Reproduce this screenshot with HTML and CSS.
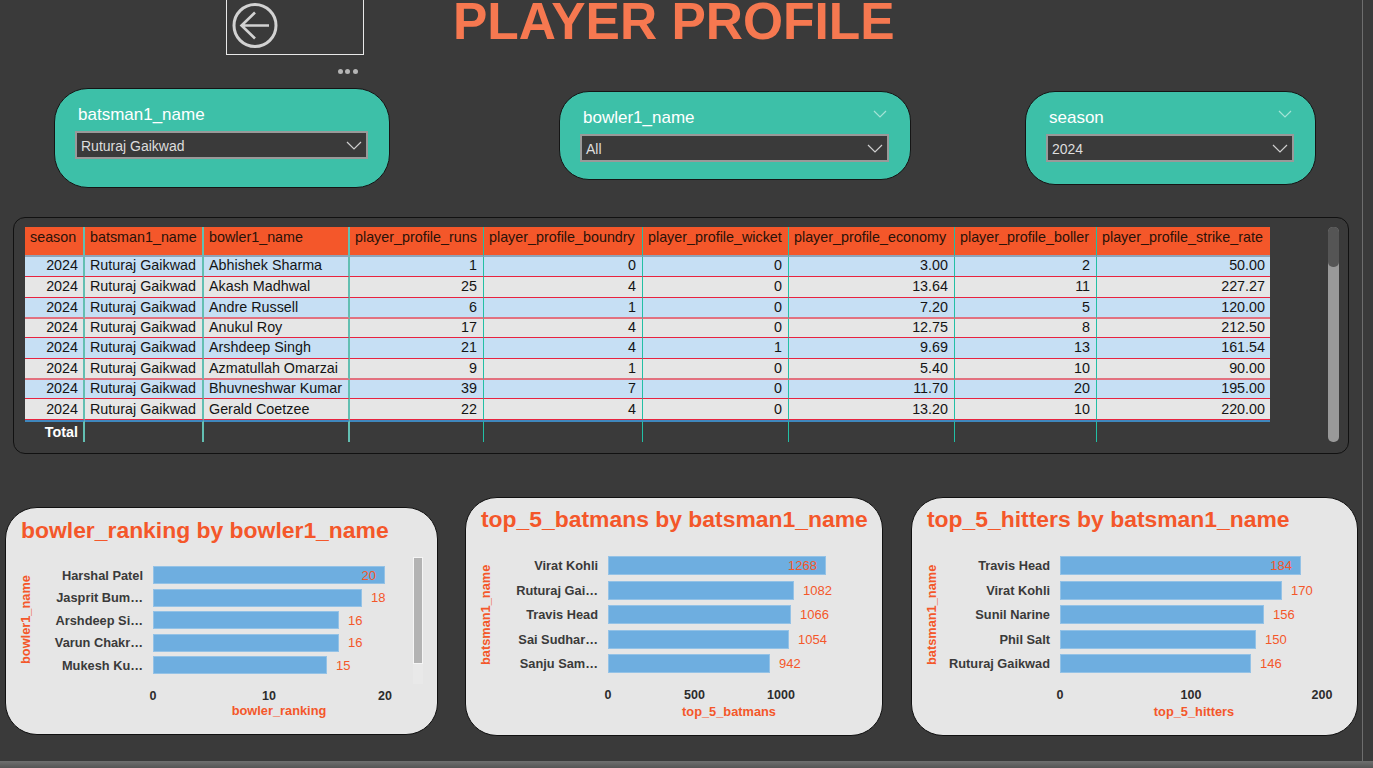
FILE: index.html
```html
<!DOCTYPE html>
<html lang="en">
  <head>
    <meta charset="UTF-8" />
    <meta name="viewport" content="width=device-width, initial-scale=1.0" />

    <title>Player Profile</title>

    <link rel="stylesheet" href="styles.css">
  </head>
  <body>
    <div class="page">
      <header class="top">
        <div class="back-box">
          <svg class="back-icon" width="48" height="48" viewBox="0 0 48 48">
            <circle cx="24" cy="23.500" r="21" fill="none" stroke="#d2d2d2" stroke-width="3" />
            <path d="M38 23.500H11M24 10.500L10.500 23.500L24 36.500" fill="none" stroke="#d2d2d2" stroke-width="2.600" />
          </svg>
        </div>
        <h1 class="title">PLAYER PROFILE</h1>
      </header>

      <div class="dots">
        <span></span><span></span><span></span>
      </div>

      <!-- Slicers -->
      <section class="slicers">
        <div class="slicer slicer-batsman">
          <div class="slicer-head">
            <span>batsman1_name</span>
          </div>
          <div class="dropdown">
            <span>Ruturaj Gaikwad</span>
            <svg width="16" height="9" viewBox="0 0 16 9"><path d="M1 1L8 8L15 1" fill="none" stroke="#cfcfcf" stroke-width="1.200" /></svg>
          </div>
        </div>

        <div class="slicer slicer-bowler">
          <div class="slicer-head">
            <span>bowler1_name</span>
            <svg class="head-chevron" width="14" height="8" viewBox="0 0 14 8"><path d="M1 1L7 7L13 1" fill="none" stroke="#a5e3d6" stroke-width="1.200" /></svg>
          </div>
          <div class="dropdown">
            <span>All</span>
            <svg width="16" height="9" viewBox="0 0 16 9"><path d="M1 1L8 8L15 1" fill="none" stroke="#cfcfcf" stroke-width="1.200" /></svg>
          </div>
        </div>

        <div class="slicer slicer-season">
          <div class="slicer-head">
            <span>season</span>
            <svg class="head-chevron" width="14" height="8" viewBox="0 0 14 8"><path d="M1 1L7 7L13 1" fill="none" stroke="#a5e3d6" stroke-width="1.200" /></svg>
          </div>
          <div class="dropdown">
            <span>2024</span>
            <svg width="16" height="9" viewBox="0 0 16 9"><path d="M1 1L8 8L15 1" fill="none" stroke="#cfcfcf" stroke-width="1.200" /></svg>
          </div>
        </div>
      </section>

      <!-- Main table -->
      <section class="table-panel">
        <table class="stats">
          <colgroup>
            <col class="c60" /><col class="c119" /><col class="c146" /><col class="c134" /><col class="c159" /><col class="c146" /><col class="c166" /><col class="c142" /><col class="c173" />
          </colgroup>
          <thead>
            <tr>
              <th>season</th>
              <th>batsman1_name</th>
              <th>bowler1_name</th>
              <th>player_profile_runs</th>
              <th>player_profile_boundry</th>
              <th>player_profile_wicket</th>
              <th>player_profile_economy</th>
              <th>player_profile_boller</th>
              <th>player_profile_strike_rate</th>
            </tr>
          </thead>
          <tbody>
            <tr><td class="num">2024</td><td>Ruturaj Gaikwad</td><td>Abhishek Sharma</td><td class="num">1</td><td class="num">0</td><td class="num">0</td><td class="num">3.00</td><td class="num">2</td><td class="num">50.00</td></tr>
            <tr><td class="num">2024</td><td>Ruturaj Gaikwad</td><td>Akash Madhwal</td><td class="num">25</td><td class="num">4</td><td class="num">0</td><td class="num">13.64</td><td class="num">11</td><td class="num">227.27</td></tr>
            <tr><td class="num">2024</td><td>Ruturaj Gaikwad</td><td>Andre Russell</td><td class="num">6</td><td class="num">1</td><td class="num">0</td><td class="num">7.20</td><td class="num">5</td><td class="num">120.00</td></tr>
            <tr><td class="num">2024</td><td>Ruturaj Gaikwad</td><td>Anukul Roy</td><td class="num">17</td><td class="num">4</td><td class="num">0</td><td class="num">12.75</td><td class="num">8</td><td class="num">212.50</td></tr>
            <tr><td class="num">2024</td><td>Ruturaj Gaikwad</td><td>Arshdeep Singh</td><td class="num">21</td><td class="num">4</td><td class="num">1</td><td class="num">9.69</td><td class="num">13</td><td class="num">161.54</td></tr>
            <tr><td class="num">2024</td><td>Ruturaj Gaikwad</td><td>Azmatullah Omarzai</td><td class="num">9</td><td class="num">1</td><td class="num">0</td><td class="num">5.40</td><td class="num">10</td><td class="num">90.00</td></tr>
            <tr><td class="num">2024</td><td>Ruturaj Gaikwad</td><td>Bhuvneshwar Kumar</td><td class="num">39</td><td class="num">7</td><td class="num">0</td><td class="num">11.70</td><td class="num">20</td><td class="num">195.00</td></tr>
            <tr><td class="num">2024</td><td>Ruturaj Gaikwad</td><td>Gerald Coetzee</td><td class="num">22</td><td class="num">4</td><td class="num">0</td><td class="num">13.20</td><td class="num">10</td><td class="num">220.00</td></tr>
          </tbody>
          <tfoot>
            <tr><td class="num">Total</td><td></td><td></td><td></td><td></td><td></td><td></td><td></td><td></td></tr>
          </tfoot>
        </table>
        <div class="table-scroll"><div class="table-thumb"></div></div>
      </section>

      <!-- Bar charts -->
      <section class="charts">
        <div class="chart chart-bowler">
          <h2 class="chart-title">bowler_ranking by bowler1_name</h2>
          <div class="plot">
            <div class="y-title">bowler1_name</div>
            <div class="plot-main">
              <div class="bars">
                <div class="bar-row"><span class="bar-label">Harshal Patel</span><span class="bar" style="width: 232px"></span><span class="bar-value inside">20</span></div>
                <div class="bar-row"><span class="bar-label">Jasprit Bum…</span><span class="bar" style="width: 209px"></span><span class="bar-value">18</span></div>
                <div class="bar-row"><span class="bar-label">Arshdeep Si…</span><span class="bar" style="width: 186px"></span><span class="bar-value">16</span></div>
                <div class="bar-row"><span class="bar-label">Varun Chakr…</span><span class="bar" style="width: 186px"></span><span class="bar-value">16</span></div>
                <div class="bar-row"><span class="bar-label">Mukesh Ku…</span><span class="bar" style="width: 174px"></span><span class="bar-value">15</span></div>
              </div>
              <div class="axis">
                <span class="tick">0</span><span class="tick">10</span><span class="tick">20</span>
              </div>
              <div class="x-title">bowler_ranking</div>
            </div>
          </div>
          <div class="chart-scroll"></div>
        </div>

        <div class="chart chart-batsman">
          <h2 class="chart-title">top_5_batmans by batsman1_name</h2>
          <div class="plot">
            <div class="y-title">batsman1_name</div>
            <div class="plot-main">
              <div class="bars">
                <div class="bar-row"><span class="bar-label">Virat Kohli</span><span class="bar" style="width: 218px"></span><span class="bar-value inside">1268</span></div>
                <div class="bar-row"><span class="bar-label">Ruturaj Gai…</span><span class="bar" style="width: 186px"></span><span class="bar-value">1082</span></div>
                <div class="bar-row"><span class="bar-label">Travis Head</span><span class="bar" style="width: 183px"></span><span class="bar-value">1066</span></div>
                <div class="bar-row"><span class="bar-label">Sai Sudhar…</span><span class="bar" style="width: 181px"></span><span class="bar-value">1054</span></div>
                <div class="bar-row"><span class="bar-label">Sanju Sam…</span><span class="bar" style="width: 162px"></span><span class="bar-value">942</span></div>
              </div>
              <div class="axis">
                <span class="tick">0</span><span class="tick">500</span><span class="tick">1000</span>
              </div>
              <div class="x-title">top_5_batmans</div>
            </div>
          </div>
        </div>

        <div class="chart chart-hitters">
          <h2 class="chart-title">top_5_hitters by batsman1_name</h2>
          <div class="plot">
            <div class="y-title">batsman1_name</div>
            <div class="plot-main">
              <div class="bars">
                <div class="bar-row"><span class="bar-label">Travis Head</span><span class="bar" style="width: 241px"></span><span class="bar-value inside">184</span></div>
                <div class="bar-row"><span class="bar-label">Virat Kohli</span><span class="bar" style="width: 222px"></span><span class="bar-value">170</span></div>
                <div class="bar-row"><span class="bar-label">Sunil Narine</span><span class="bar" style="width: 204px"></span><span class="bar-value">156</span></div>
                <div class="bar-row"><span class="bar-label">Phil Salt</span><span class="bar" style="width: 196px"></span><span class="bar-value">150</span></div>
                <div class="bar-row"><span class="bar-label">Ruturaj Gaikwad</span><span class="bar" style="width: 191px"></span><span class="bar-value">146</span></div>
              </div>
              <div class="axis">
                <span class="tick">0</span><span class="tick">100</span><span class="tick">200</span>
              </div>
              <div class="x-title">top_5_hitters</div>
            </div>
          </div>
        </div>
      </section>
    </div>
    <div class="bottom-bar"></div>
  </body>
</html>
```

FILE: styles.css
```css
* {
  box-sizing: border-box;
}
html,
body {
  height: 100%;
  margin: 0;
}
body {
  background-color: #3a3a3a;
  font-family: "Liberation Sans", Arial, sans-serif;
  overflow: hidden;
}
.page {
  width: 1363px;
  height: 761px;
  border-right: 1px solid #6e6e6e;
  overflow: hidden;
}
.bottom-bar {
  height: 7px;
  background: linear-gradient(#6f6f6f, #555555);
}

/* Header */
.top {
  display: flex;
  height: 54px;
  padding-left: 226px;
}
.back-box {
  width: 138px;
  height: 56px;
  margin-top: -1px;
  border: 1px solid #e8e8e8;
  padding: 2px 0 0 4px;
}
.back-icon {
  display: block;
}
.title {
  margin: 0 0 0 89px;
  color: #f67850;
  font-size: 51.500px;
  line-height: 43px;
  font-weight: 700;
  white-space: nowrap;
}
.dots {
  display: flex;
  gap: 2.500px;
  height: 34px;
  padding: 15px 0 0 337.500px;
}
.dots span {
  width: 5px;
  height: 5px;
  border-radius: 50%;
  background-color: #b5b5b5;
}

/* Slicers */
.slicers {
  display: flex;
  align-items: flex-start;
  height: 129px;
}
.slicer {
  background-color: #3dc0a8;
  border: 1px solid #151515;
  padding: 13px 21px 0 20px;
}
.slicer-batsman {
  width: 336px;
  height: 100px;
  margin-left: 54px;
  border-radius: 34px;
}
.slicer-bowler {
  width: 352px;
  height: 89px;
  margin: 3px 0 0 169px;
  border-radius: 30px;
}
.slicer-season {
  width: 291px;
  height: 94px;
  margin: 3px 0 0 114px;
  border-radius: 30px;
}
.slicer-head {
  display: flex;
  justify-content: space-between;
  height: 29px;
  padding: 0 2px 0 3px;
  color: #ffffff;
  font-size: 17px;
  line-height: 26px;
}
.head-chevron {
  margin-top: 5px;
}
.dropdown {
  display: flex;
  align-items: center;
  justify-content: space-between;
  height: 28px;
  padding: 1px 4px 0;
  background-color: #3a3a3a;
  border: 2px solid #999999;
  color: #dddddd;
  font-size: 14px;
}

/* Table */
.table-panel {
  display: flex;
  justify-content: space-between;
  width: 1336px;
  height: 237px;
  margin-left: 13px;
  padding: 9px 9px 0 11px;
  border: 1px solid #111111;
  border-radius: 12px;
}
.stats {
  width: 1245px;
  height: 215px;
  table-layout: fixed;
  border-collapse: separate;
  border-spacing: 0;
  font-size: 14.330px;
  line-height: 16px;
  color: #141414;
}
.c60 { width: 60px; }
.c119 { width: 119px; }
.c146 { width: 146px; }
.c134 { width: 134px; }
.c159 { width: 159px; }
.c166 { width: 166px; }
.c142 { width: 142px; }
.c173 { width: 173px; }
.stats th {
  height: 30px;
  padding: 2px 5px 0;
  background-color: #f4572a;
  border-right: 1px solid #22bfa5;
  border-bottom: 2px solid #8fa3b8;
  color: #2a1208;
  font-weight: 400;
  text-align: left;
  vertical-align: top;
  white-space: nowrap;
}
.stats td {
  height: 21px;
  padding: 1px 5px 0;
  border-right: 1px solid #22bfa5;
  border-bottom: 1px solid #e8233f;
  vertical-align: top;
  white-space: nowrap;
  overflow: hidden;
}
.stats th:last-child,
.stats td:last-child {
  border-right: none;
}
/* the first column rules come out wider and paler in the source */
.stats th:nth-child(-n+3),
.stats td:nth-child(-n+3) {
  border-right: 2px solid #62bfb2;
}
.stats tbody tr:nth-child(odd) td {
  background-color: #c6dff4;
}
.stats tbody tr:nth-child(even) td {
  background-color: #e6e6e6;
}
/* the source rows sit on fractional pixels, so their heights and rules vary */
.stats tbody tr:nth-child(1) td {
  height: 20px;
  padding-top: 0;
}
.stats tbody tr:nth-child(3) td,
.stats tbody tr:nth-child(6) td {
  border-bottom: 2px solid #e2717f;
}
.stats tbody tr:nth-child(4) td,
.stats tbody tr:nth-child(7) td {
  height: 19px;
  padding-top: 0;
}
.stats tbody tr:nth-child(8) td {
  padding-top: 2px;
}
.stats .num {
  padding-right: 6px;
  text-align: right;
}
.stats td:first-child.num,
.stats td:last-child.num {
  padding-right: 5px;
}
.stats tfoot td {
  height: 22px;
  padding-top: 2px;
  border-top: 2px solid #3f87bd;
  border-bottom: none;
  color: #ffffff;
  font-weight: 700;
}
.table-scroll {
  width: 11px;
  height: 215px;
  border-radius: 5px;
  background-color: #999999;
}
.table-thumb {
  height: 40px;
  border-radius: 5px;
  background-color: #555555;
}

/* Charts */
.charts {
  display: flex;
  align-items: flex-start;
  margin-top: 43px;
}
.chart {
  position: relative;
  background-color: #e6e6e6;
  border: 1px solid #111111;
  border-radius: 32px;
  padding-left: 14px;
}
.chart-title {
  height: 58px;
  margin: 0;
  padding-left: 1px;
  color: #f4572a;
  font-size: 22.900px;
  line-height: 43px;
  font-weight: 700;
  white-space: nowrap;
}
.plot {
  display: flex;
}
.y-title {
  width: 16px;
  height: 118px;
  margin: 0 2px 0 -2px;
  color: #f4572a;
  font-size: 12.800px;
  font-weight: 700;
  line-height: 16px;
  text-align: center;
  white-space: nowrap;
  writing-mode: vertical-rl;
  transform: rotate(180deg);
}
.bars {
  display: flex;
  flex-direction: column;
}
.bar-row {
  display: flex;
  align-items: center;
  height: 18px;
}
.bar-label {
  flex: none;
  margin-right: 10px;
  color: #3a3a3a;
  font-size: 12.800px;
  font-weight: 700;
  text-align: right;
  white-space: nowrap;
}
.bar {
  flex: none;
  height: 100%;
  background-color: #6eaee0;
  border: 1px solid #94c2e6;
}
.bar-value {
  margin-left: 9px;
  color: #f4572a;
  font-size: 13px;
}
.bar-value.inside {
  margin-left: -9px;
  transform: translateX(-100%);
}
.axis {
  display: flex;
  justify-content: space-between;
  margin-top: 15px;
  color: #2c2c2c;
  font-size: 12.500px;
  font-weight: 700;
  line-height: 14px;
}
.tick {
  display: flex;
  justify-content: center;
  width: 0;
}
.x-title {
  margin-top: 3px;
  color: #f4572a;
  font-size: 12.800px;
  font-weight: 700;
  line-height: 14px;
  text-align: center;
}

.chart-bowler {
  width: 433px;
  height: 228px;
  margin: 10px 0 0 5px;
}
.chart-bowler .chart-title {
  line-height: 45px;
}
.chart-bowler .y-title {
  height: 108px;
}
.chart-bowler .bars {
  gap: 4.500px;
}
.chart-bowler .bar-label {
  width: 107px;
}
.chart-bowler .axis {
  width: 232px;
  margin-left: 117px;
}
.chart-bowler .x-title {
  width: 252px;
  margin-top: 1px;
  margin-left: 117px;
}
.chart-scroll {
  position: absolute;
  left: 407px;
  top: 49px;
  width: 10px;
  height: 107px;
  background-color: #b3b3b3;
  border: 1px solid #f5f5f5;
  box-shadow: 0 20px 0 #e9e9e9;
}

.chart-batsman {
  width: 418px;
  height: 239px;
  margin-left: 27px;
}
.chart-batsman .bars,
.chart-hitters .bars {
  gap: 5.500px;
}
.chart-batsman .bar-row,
.chart-hitters .bar-row {
  height: 19px;
}
.chart-batsman .bar-label {
  width: 102px;
}
.chart-batsman .axis {
  width: 173px;
  margin-left: 112px;
}
.chart-batsman .x-title {
  width: 242px;
  margin-left: 112px;
}

.chart-hitters {
  width: 447px;
  height: 239px;
  margin-left: 28px;
}
.chart-hitters .bar-label {
  width: 108px;
}
.chart-hitters .axis {
  width: 262px;
  margin-left: 118px;
}
.chart-hitters .x-title {
  width: 268px;
  margin-left: 118px;
}
```
